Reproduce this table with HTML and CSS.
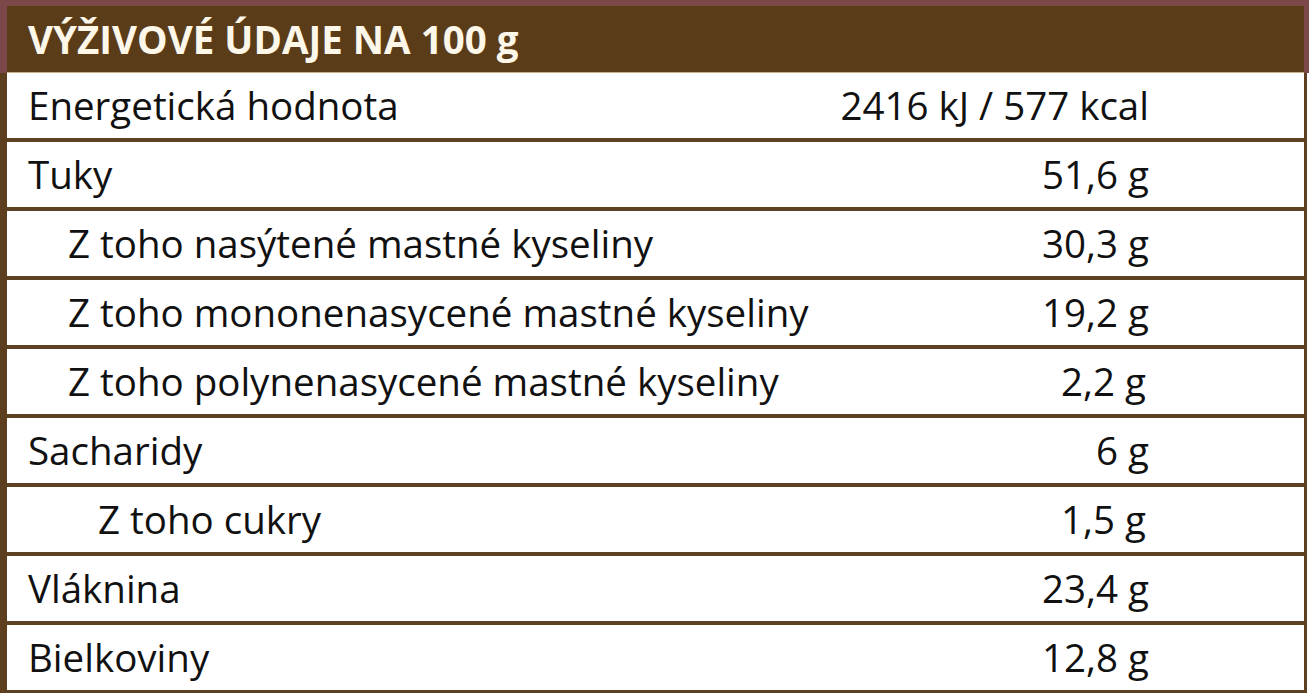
FILE: index.html
```html
<!DOCTYPE html>
<html lang="sk">
<head>
<meta charset="utf-8">
<title>Výživové údaje</title>
<link rel="stylesheet" href="styles.css">
</head>
<body>
<div class="panel">
  <div class="head-wrap">
    <h1 class="head">VÝŽIVOVÉ ÚDAJE NA 100 g</h1>
  </div>
  <div class="rows">
    <div class="row"><span class="label">Energetická hodnota</span><span class="val">2416 kJ / 577 kcal</span></div>
    <div class="row"><span class="label">Tuky</span><span class="val">51,6 g</span></div>
    <div class="row sub"><span class="label">Z toho nasýtené mastné kyseliny</span><span class="val">30,3 g</span></div>
    <div class="row sub"><span class="label">Z toho mononenasycené mastné kyseliny</span><span class="val">19,2 g</span></div>
    <div class="row sub"><span class="label">Z toho polynenasycené mastné kyseliny</span><span class="val v-narrow">2,2 g</span></div>
    <div class="row"><span class="label">Sacharidy</span><span class="val">6 g</span></div>
    <div class="row sub2"><span class="label">Z toho cukry</span><span class="val v-narrow">1,5 g</span></div>
    <div class="row"><span class="label">Vláknina</span><span class="val">23,4 g</span></div>
    <div class="row"><span class="label">Bielkoviny</span><span class="val">12,8 g</span></div>
  </div>
</div>
</body>
</html>
```
FILE: styles.css
```css
html, body {
  margin: 0;
  padding: 0;
  background: #ffffff;
}
body {
  font-family: "Open Sans", "DejaVu Sans", sans-serif;
  color: #111111;
  width: 1309px;
  height: 693px;
  overflow: hidden;
}
.panel {
  width: 1309px;
}
.head-wrap {
  background: #7b4749;
  padding: 6px 5px 0 7px;
}
.head {
  margin: 0;
  height: 67px;
  box-sizing: border-box;
  background: #5b3c19;
  color: #fdf7ea;
  font-size: 38.5px;
  font-weight: 700;
  line-height: 66px;
  padding-left: 21px;
  border-bottom: 1px solid #c9b08c;
}
.rows {
  width: 1307px;
  box-sizing: border-box;
  border-left: 7px solid #5d3f1f;
  border-right: 3px solid #5d3f1f;
  background: #ffffff;
}
.row {
  display: flex;
  justify-content: space-between;
  align-items: center;
  height: 69px;
  box-sizing: border-box;
  border-bottom: 4px solid #5c4222;
  padding: 0 155px 2px 21px;
  font-size: 38.5px;
}
.row.sub .label {
  padding-left: 40px;
}
.row.sub2 .label {
  padding-left: 70px;
}
.val {
  white-space: nowrap;
}
.v-narrow {
  margin-right: 3px;
}
```
